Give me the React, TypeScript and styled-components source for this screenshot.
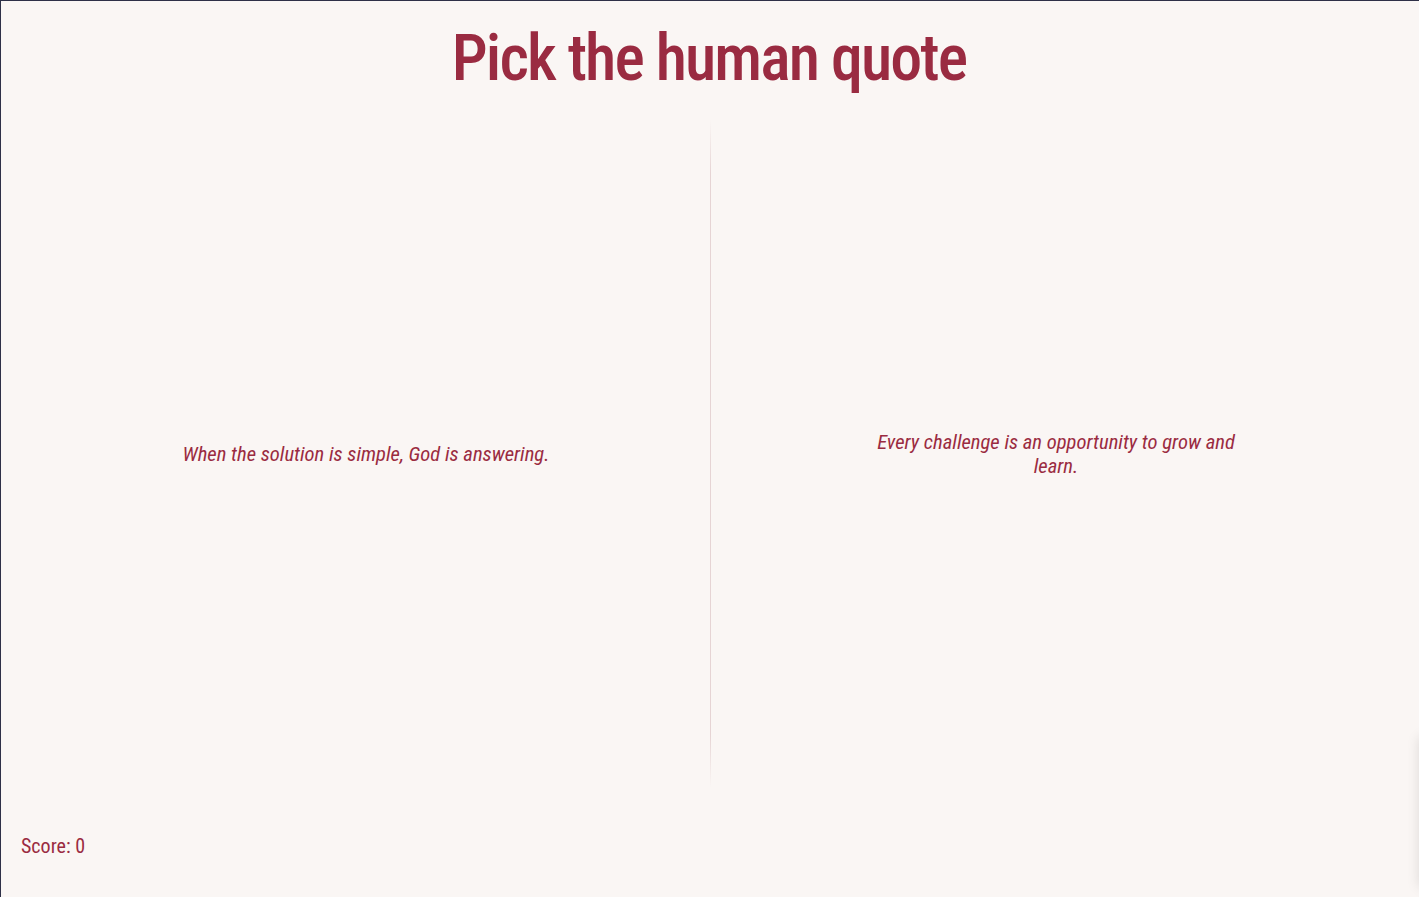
import styled, { createGlobalStyle } from 'styled-components';

const quotes = [
  { id: 1, text: 'When the solution is simple, God is answering.' },
  { id: 2, text: 'Every challenge is an opportunity to grow and learn.' },
];

export default function App() {
  const score = 0;

  return (
    <>
      <GlobalStyle />
      <Page>
        <Title>Pick the human quote</Title>
        <Choices>
          {quotes.map((q, i) => (
            <Choice key={q.id} $first={i === 0}>
              <Quote>{q.text}</Quote>
            </Choice>
          ))}
        </Choices>
        <Score>Score: {score}</Score>
        <EdgeShadow />
      </Page>
    </>
  );
}

const GlobalStyle = createGlobalStyle`
  html, body {
    margin: 0;
    padding: 0;
    background: #faf6f4;
  }
  body {
    font-family: Roboto, "Liberation Sans", sans-serif;
    font-stretch: condensed;
    overflow: hidden;
  }
`;

const Page = styled.div`
  position: relative;
  box-sizing: border-box;
  height: 100vh;
  display: flex;
  flex-direction: column;
  padding: 0 18px 0 20px;
  border-top: 1px solid #2e3047;
  border-left: 1px solid #2e3047;
  background: #faf6f4;
  color: #9a2b41;
`;

const Title = styled.h1`
  margin: 20px 0 0;
  padding-right: 4px;
  text-align: center;
  font-size: 64px;
  font-weight: 480;
  font-stretch: condensed;
  letter-spacing: -1.9px;
  line-height: 75px;
  color: #9a2b41;
`;

const Choices = styled.div`
  flex: 1;
  display: grid;
  grid-template-columns: 1fr 1fr;
  margin: 24px 0 3px;
`;

const Choice = styled.div<{ $first: boolean }>`
  display: flex;
  align-items: center;
  justify-content: center;
  position: relative;
  cursor: pointer;

  &::after {
    content: '';
    display: ${(p) => (p.$first ? 'block' : 'none')};
    position: absolute;
    top: 0;
    bottom: 0;
    right: 0;
    width: 1px;
    background: linear-gradient(
      to bottom,
      rgba(230, 212, 212, 0),
      rgba(230, 212, 212, 1) 8%,
      rgba(230, 212, 212, 1) 92%,
      rgba(230, 212, 212, 0)
    );
  }
`;

const Quote = styled.p`
  margin: 0;
  max-width: 385px;
  text-align: center;
  font-size: 20.6px;
  font-style: italic;
  line-height: 24px;
  color: #9a2b41;
`;

const Score = styled.div`
  padding: 43px 0 39px;
  font-size: 20px;
  line-height: 24px;
  color: #9a2b41;
`;

const EdgeShadow = styled.div`
  position: absolute;
  right: -40px;
  bottom: 10px;
  width: 40px;
  height: 150px;
  box-shadow: 0 0 12px rgba(0, 0, 0, 0.12);
`;
